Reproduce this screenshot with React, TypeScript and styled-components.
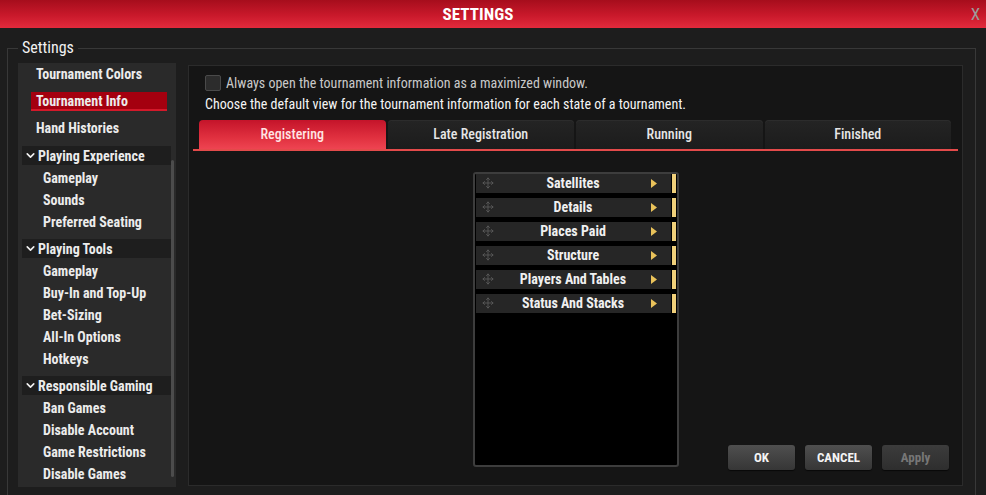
import React from "react";
import styled, { createGlobalStyle } from "styled-components";
import { Move, ChevronDown } from "lucide-react";

const FONT = `"Liberation Sans Narrow", "Roboto Condensed", "DejaVu Sans Condensed", Roboto, sans-serif`;

const Global = createGlobalStyle`
  html, body { margin: 0; padding: 0; background: #1d1d1d; }
  body { font-family: ${FONT}; color: #eaeaea; }
  * { box-sizing: border-box; }
`;

const Window = styled.div`
  width: 986px;
  height: 495px;
  overflow: hidden;
  background: #1d1d1d;
  display: flex;
  flex-direction: column;
`;

const TitleBar = styled.div`
  height: 28px;
  flex: none;
  display: grid;
  grid-template-columns: 1fr auto 1fr;
  align-items: center;
  background: linear-gradient(#a60d1c, #c9192b 55%, #e22a3c);
`;

const Title = styled.div`
  grid-column: 2;
  margin-right: 30px;
  font-size: 17px;
  font-weight: 700;
  color: #fff;
  letter-spacing: 0.1px;
`;

const Close = styled.div`
  justify-self: end;
  margin-right: 6px;
  font-size: 17px;
  color: #9c9c9c;
  font-weight: 400;
`;

const Fieldset = styled.fieldset`
  margin: 12px 10px 0 7px;
  padding: 7px 12px 0 10px;
  border: 1px solid #383838;
  height: 480px;
  min-width: 0;
  flex: none;
`;

const Legend = styled.legend`
  padding: 0 4px;
  font-size: 16px;
  line-height: 16px;
  color: #f2f2f2;
`;

const Body = styled.div`
  display: grid;
  grid-template-columns: 158px 1fr;
  column-gap: 12px;
  align-items: start;
`;

const Nav = styled.nav`
  position: relative;
  height: 424px;
  background: #2a2a2a;
  padding-top: 2px;
  font-size: 14px;
  font-weight: 700;
  color: #ececec;
`;

const TopItem = styled.div<{ $active?: boolean }>`
  margin: 0 0 8px 13px;
  width: 136px;
  height: 19px;
  padding-left: 5px;
  background: ${(p) => (p.$active ? "#a4000f" : "transparent")};
  border-bottom: ${(p) => (p.$active ? "2px solid #d3192a" : "none")};
  line-height: ${(p) => (p.$active ? "18px" : "19px")};
`;

const Group = styled.div`
  margin-bottom: 8px;
`;

const GroupHeader = styled.div`
  margin: 0 5px 0 4px;
  height: 19px;
  display: flex;
  align-items: center;
  gap: 1px;
  padding-left: 2px;
  background: #1e1e1e;
`;

const SubItem = styled.div`
  height: 22px;
  padding: 2px 0 0 25px;
  line-height: 22px;
`;

const ScrollThumb = styled.div`
  position: absolute;
  right: 2px;
  top: 97px;
  width: 3px;
  height: 317px;
  border-radius: 2px;
  background: #4c4c4c;
`;

const Panel = styled.section`
  margin-top: 2px;
  height: 421px;
  background: #151515;
  border: 1px solid #2b2b2b;
  padding: 9px 4px 0 4px;
  display: flex;
  flex-direction: column;
`;

const CheckRow = styled.label`
  margin-left: 12px;
  height: 16px;
  display: flex;
  align-items: center;
  gap: 5px;
  font-size: 14px;
  color: #c9c9c9;
`;

const CheckBox = styled.span`
  width: 16px;
  height: 16px;
  border: 1px solid #4a4a4a;
  border-radius: 2px;
  background: #2c2c2c;
`;

const Description = styled.div`
  margin: 4px 0 0 12px;
  font-size: 14px;
  line-height: 18px;
  color: #f4f4f4;
`;

const TabRow = styled.div`
  margin-top: 7px;
  display: flex;
  gap: 2px;
  padding: 0 7px 0 6px;
  border-bottom: 2px solid #e34a4a;
`;

const Tab = styled.div<{ $active?: boolean }>`
  flex: 1;
  height: 29px;
  padding-bottom: 2px;
  border-radius: 4px 4px 0 0;
  display: flex;
  align-items: center;
  justify-content: center;
  font-size: 14px;
  font-weight: 500;
  color: ${(p) => (p.$active ? "#ffe4e4" : "#e6e6e6")};
  background: ${(p) =>
    p.$active
      ? "linear-gradient(#c4142a, #e0303f 60%, #ee4451)"
      : "linear-gradient(#242424, #1c1c1c)"};
  box-shadow: ${(p) => (p.$active ? "none" : "inset 0 1px 0 #2c2c2c")};
`;

const Content = styled.div`
  flex: 1;
  display: grid;
  grid-template-areas: "stack";
`;

const ListBox = styled.div`
  grid-area: stack;
  justify-self: center;
  align-self: start;
  margin-top: 21px;
  width: 206px;
  height: 295px;
  background: #000;
  border: 2px solid #3d3d3d;
  border-radius: 3px;
  padding-left: 1px;
  display: flex;
  flex-direction: column;
  gap: 5px;
`;

const Row = styled.div`
  display: flex;
  height: 19px;
  flex: none;
`;

const RowBody = styled.div`
  width: 195px;
  display: grid;
  grid-template-columns: 24px 1fr 24px;
  align-items: center;
  background: #262626;
  font-size: 14px;
  font-weight: 700;
  color: #f0f0f0;
  padding-bottom: 1px;
`;

const Handle = styled.span`
  display: flex;
  justify-content: center;
  color: #5a5a5a;
`;

const Label = styled.span`
  text-align: center;
`;

const Arrow = styled.span`
  padding-left: 4px;
  display: flex;
`;

const Bar = styled.div`
  width: 4px;
  margin-left: 1px;
  background: #f0d07a;
`;

const ButtonRow = styled.div`
  grid-area: stack;
  justify-self: end;
  align-self: end;
  margin: 0 9px 15px 0;
  display: flex;
  gap: 10px;
`;

const Button = styled.button<{ $disabled?: boolean }>`
  width: 67px;
  height: 25px;
  border: none;
  border-radius: 3px;
  background: ${(p) =>
    p.$disabled ? "linear-gradient(#3c3c3c, #2e2e2e)" : "linear-gradient(#4f4f4f, #363636)"};
  box-shadow: 0 1px 1px rgba(0, 0, 0, 0.6);
  font-family: ${FONT};
  font-size: 13px;
  font-weight: 700;
  color: ${(p) => (p.$disabled ? "#777" : "#f4f4f4")};
`;

const groups = [
  { title: "Playing Experience", items: ["Gameplay", "Sounds", "Preferred Seating"] },
  { title: "Playing Tools", items: ["Gameplay", "Buy-In and Top-Up", "Bet-Sizing", "All-In Options", "Hotkeys"] },
  { title: "Responsible Gaming", items: ["Ban Games", "Disable Account", "Game Restrictions", "Disable Games"] },
];

const tabs = ["Registering", "Late Registration", "Running", "Finished"];
const views = ["Satellites", "Details", "Places Paid", "Structure", "Players And Tables", "Status And Stacks"];

export default function App() {
  return (
    <>
      <Global />
      <Window>
        <TitleBar>
          <Title>SETTINGS</Title>
          <Close>X</Close>
        </TitleBar>
        <Fieldset>
          <Legend>Settings</Legend>
          <Body>
            <Nav>
              <TopItem>Tournament Colors</TopItem>
              <TopItem $active>Tournament Info</TopItem>
              <TopItem>Hand Histories</TopItem>
              {groups.map((g) => (
                <Group key={g.title}>
                  <GroupHeader>
                    <ChevronDown size={13} strokeWidth={3} color="#f0f0f0" />
                    {g.title}
                  </GroupHeader>
                  {g.items.map((i) => (
                    <SubItem key={i}>{i}</SubItem>
                  ))}
                </Group>
              ))}
              <ScrollThumb />
            </Nav>
            <Panel>
              <CheckRow>
                <CheckBox />
                Always open the tournament information as a maximized window.
              </CheckRow>
              <Description>
                Choose the default view for the tournament information for each state of a tournament.
              </Description>
              <TabRow>
                {tabs.map((t, i) => (
                  <Tab key={t} $active={i === 0}>
                    {t}
                  </Tab>
                ))}
              </TabRow>
              <Content>
                <ListBox>
                  {views.map((v) => (
                    <Row key={v}>
                      <RowBody>
                        <Handle>
                          <Move size={12} strokeWidth={1.8} />
                        </Handle>
                        <Label>{v}</Label>
                        <Arrow>
                          <svg width="6" height="9" viewBox="0 0 6 9">
                            <path d="M0 0 L6 4.5 L0 9 Z" fill="#e9c25a" />
                          </svg>
                        </Arrow>
                      </RowBody>
                      <Bar />
                    </Row>
                  ))}
                </ListBox>
                <ButtonRow>
                  <Button>OK</Button>
                  <Button>CANCEL</Button>
                  <Button $disabled>Apply</Button>
                </ButtonRow>
              </Content>
            </Panel>
          </Body>
        </Fieldset>
      </Window>
    </>
  );
}
